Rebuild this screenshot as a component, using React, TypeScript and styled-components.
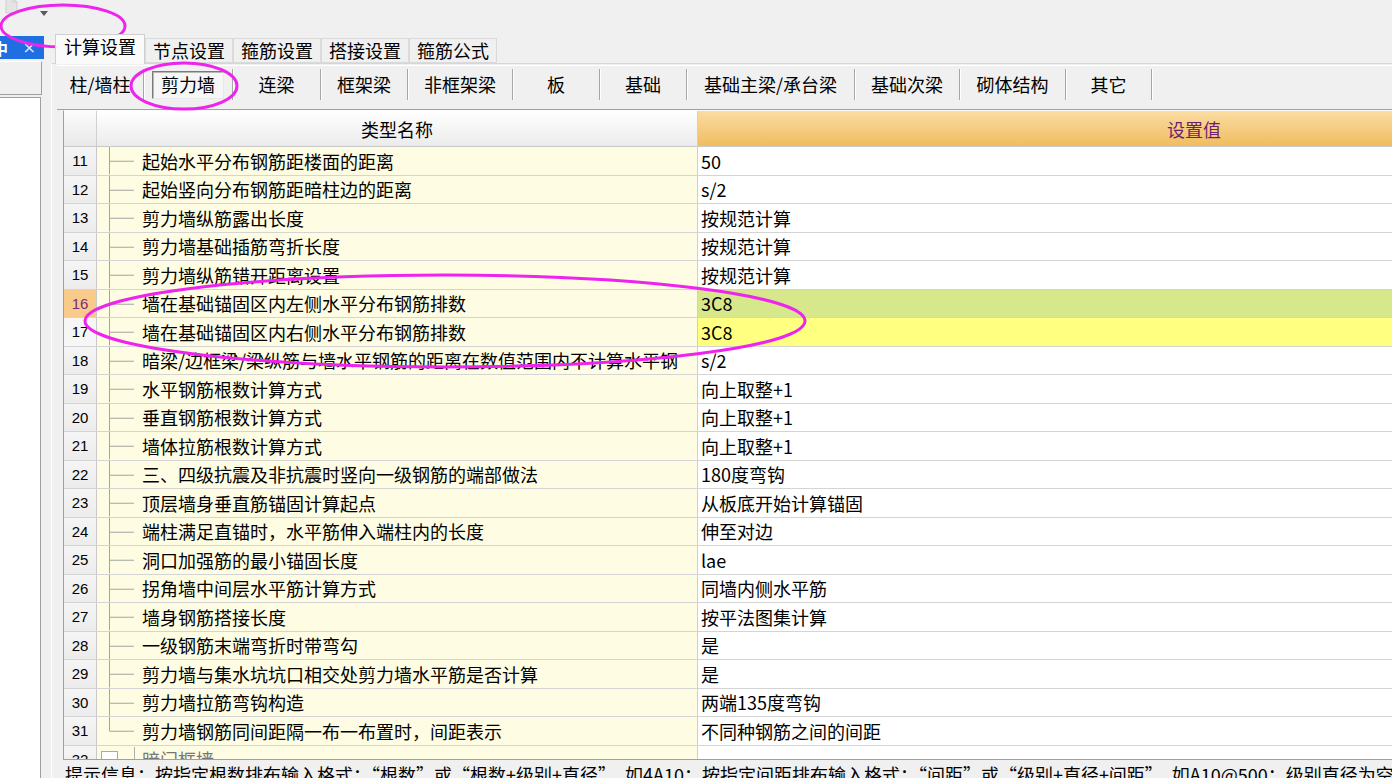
import React from 'react'
import styled, { createGlobalStyle } from 'styled-components'

type RowState = 'selected' | 'editing'

type SettingRow = {
  no: number
  name: string
  value: string
  state?: RowState
  last?: boolean
}

const tabs = ['计算设置', '节点设置', '箍筋设置', '搭接设置', '箍筋公式']

// button widths follow the original toolbar (min width ~87, wider for long labels)
const tools = [
  { label: '柱/墙柱', width: 87 },
  { label: '剪力墙', width: 89, pressed: true },
  { label: '连梁', width: 88 },
  { label: '框架梁', width: 87 },
  { label: '非框架梁', width: 105 },
  { label: '板', width: 87 },
  { label: '基础', width: 87 },
  { label: '基础主梁/承台梁', width: 168 },
  { label: '基础次梁', width: 105 },
  { label: '砌体结构', width: 106 },
  { label: '其它', width: 86 },
]

const rows: SettingRow[] = [
  { no: 11, name: '起始水平分布钢筋距楼面的距离', value: '50' },
  { no: 12, name: '起始竖向分布钢筋距暗柱边的距离', value: 's/2' },
  { no: 13, name: '剪力墙纵筋露出长度', value: '按规范计算' },
  { no: 14, name: '剪力墙基础插筋弯折长度', value: '按规范计算' },
  { no: 15, name: '剪力墙纵筋错开距离设置', value: '按规范计算' },
  { no: 16, name: '墙在基础锚固区内左侧水平分布钢筋排数', value: '3C8', state: 'selected' },
  { no: 17, name: '墙在基础锚固区内右侧水平分布钢筋排数', value: '3C8', state: 'editing' },
  { no: 18, name: '暗梁/边框梁/梁纵筋与墙水平钢筋的距离在数值范围内不计算水平钢', value: 's/2' },
  { no: 19, name: '水平钢筋根数计算方式', value: '向上取整+1' },
  { no: 20, name: '垂直钢筋根数计算方式', value: '向上取整+1' },
  { no: 21, name: '墙体拉筋根数计算方式', value: '向上取整+1' },
  { no: 22, name: '三、四级抗震及非抗震时竖向一级钢筋的端部做法', value: '180度弯钩' },
  { no: 23, name: '顶层墙身垂直筋锚固计算起点', value: '从板底开始计算锚固' },
  { no: 24, name: '端柱满足直锚时，水平筋伸入端柱内的长度', value: '伸至对边' },
  { no: 25, name: '洞口加强筋的最小锚固长度', value: 'lae' },
  { no: 26, name: '拐角墙中间层水平筋计算方式', value: '同墙内侧水平筋' },
  { no: 27, name: '墙身钢筋搭接长度', value: '按平法图集计算' },
  { no: 28, name: '一级钢筋末端弯折时带弯勾', value: '是' },
  { no: 29, name: '剪力墙与集水坑坑口相交处剪力墙水平筋是否计算', value: '是' },
  { no: 30, name: '剪力墙拉筋弯钩构造', value: '两端135度弯钩' },
  { no: 31, name: '剪力墙钢筋同间距隔一布一布置时，间距表示', value: '不同种钢筋之间的间距', last: true },
]

const hint =
  '提示信息：按指定根数排布输入格式：“根数”或“根数+级别+直径”，如4A10；按指定间距排布输入格式：“间距”或“级别+直径+间距”，如A10@500；级别直径为空时取墙身水平筋'

export default function App() {
  return (
    <>
      <GlobalStyle />
      <Page>
        <TopStrip>
          <FadedIcon width="16" height="18" viewBox="0 0 16 18">
            <path d="M2 0 L2 15 L13 15 L13 4 L9 0 Z" fill="#e4e4e4" stroke="#cfcfcf" />
            <path d="M9 0 L9 4 L13 4" fill="none" stroke="#cfcfcf" />
          </FadedIcon>
          <DropArrow width="8" height="5" viewBox="0 0 8 5">
            <path d="M0 0 L8 0 L4 5 Z" fill="#5a5a5a" />
          </DropArrow>
        </TopStrip>
        <Body>
          <LeftPane>
            <PaneHeader>
              <PaneTitle>中</PaneTitle>
              <PaneClose>×</PaneClose>
            </PaneHeader>
            <PaneTool />
            <PaneList />
          </LeftPane>
          <Main>
            <TabStrip>
              {tabs.map((t, i) => (
                <Tab key={t} $active={i === 0}>{t}</Tab>
              ))}
            </TabStrip>
            <TabPage>
              <Toolbar>
                {tools.map(t => (
                  <ToolItem key={t.label} style={{ width: t.width }}>
                    <ToolLabel $pressed={!!t.pressed}>{t.label}</ToolLabel>
                  </ToolItem>
                ))}
              </Toolbar>
              <GridWrap>
                <Grid>
                  <HeaderRow>
                    <NumHead />
                    <NameHead>类型名称</NameHead>
                    <ValueHead>设置值</ValueHead>
                  </HeaderRow>
                  {rows.map(r => (
                    <Row key={r.no}>
                      <NumCell $state={r.state}>{r.no}</NumCell>
                      <NameCell>
                        <TreeGuide last={!!r.last} />
                        <NameText>{r.name}</NameText>
                      </NameCell>
                      <ValueCell $state={r.state}>{r.value}</ValueCell>
                    </Row>
                  ))}
                  <Row>
                    <NumCell>32</NumCell>
                    <NameCell>
                      <Toggle />
                      <GroupText>暗门框墙</GroupText>
                    </NameCell>
                    <ValueCell />
                  </Row>
                </Grid>
              </GridWrap>
              <Status>{hint}</Status>
            </TabPage>
          </Main>
        </Body>
        <Annotations width="1392" height="778" viewBox="0 0 1392 778">
          <ellipse cx="63" cy="26" rx="62" ry="21" />
          <ellipse cx="184" cy="86" rx="53" ry="23" />
          <ellipse cx="445" cy="321" rx="360" ry="46" />
        </Annotations>
      </Page>
    </>
  )
}

function TreeGuide({ last }: { last: boolean }) {
  return (
    <TreeSvg width="45" height="28" viewBox="0 0 45 28" preserveAspectRatio="none">
      <line x1="12.5" y1="0" x2="12.5" y2={last ? 14.5 : 28} />
      <line x1="12.5" y1="14.5" x2="37" y2="14.5" />
    </TreeSvg>
  )
}

const GlobalStyle = createGlobalStyle`
  html, body {
    margin: 0;
    padding: 0;
    background: #f0f0f0;
  }
  body {
    font-family: "Noto Sans CJK SC", "Noto Sans", sans-serif;
    color: #000;
    overflow: hidden;
  }
`

const Page = styled.div`
  position: relative;
  width: 1392px;
  height: 778px;
  overflow: hidden;
  background: #f0f0f0;
  display: flex;
  flex-direction: column;
`

const TopStrip = styled.div`
  height: 35px;
  flex-shrink: 0;
  display: flex;
  align-items: flex-start;
`

const FadedIcon = styled.svg`
  margin: -2px 0 0 4px;
`

const DropArrow = styled.svg`
  margin: 11px 0 0 20px;
`

const Body = styled.div`
  flex: 1;
  min-height: 0;
  display: flex;
`

const LeftPane = styled.div`
  width: 44px;
  flex-shrink: 0;
  display: flex;
  flex-direction: column;
`

const PaneHeader = styled.div`
  margin-top: 1px;
  height: 23px;
  background: #1d6fe2;
  color: #fff;
  display: flex;
  align-items: center;
  justify-content: space-between;
  overflow: hidden;
  font-size: 16px;
`

const PaneTitle = styled.span`
  margin-left: -8px;
  font-weight: 700;
`

const PaneClose = styled.span`
  margin-right: 8px;
  font-family: "DejaVu Sans", sans-serif;
  font-size: 16px;
  color: #dfe9ff;
`

const PaneTool = styled.div`
  margin-top: 2px;
  width: 42px;
  height: 34px;
  box-sizing: border-box;
  border-top: 1px solid #fff;
  border-right: 1px solid #a0a0a0;
  border-bottom: 1px solid #a0a0a0;
  background: #f0f0f0;
`

const PaneList = styled.div`
  margin-top: 2px;
  width: 41px;
  flex: 1;
  box-sizing: border-box;
  background: #fff;
  border-top: 1px solid #a0a0a0;
  border-right: 1px solid #a0a0a0;
`

const Main = styled.div`
  flex: 1;
  min-width: 0;
  margin-left: 7px;
  display: flex;
  flex-direction: column;
`

const TabStrip = styled.div`
  height: 28px;
  flex-shrink: 0;
  padding-left: 4px;
  display: flex;
  align-items: flex-end;
`

const Tab = styled.div<{ $active: boolean }>`
  position: relative;
  z-index: ${p => (p.$active ? 1 : 0)};
  box-sizing: border-box;
  height: ${p => (p.$active ? '30px' : '25px')};
  margin-bottom: ${p => (p.$active ? '-1px' : '0')};
  padding: ${p => (p.$active ? '0 8px' : '0 7px')};
  border: 1px solid ${p => (p.$active ? '#d0d0d0' : '#dadada')};
  border-bottom: ${p => (p.$active ? 'none' : '1px solid #dadada')};
  background: ${p => (p.$active ? '#fafafa' : '#f0f0f0')};
  font-size: 18px;
  line-height: 23px;
  white-space: nowrap;
`

const TabPage = styled.div`
  flex: 1;
  min-height: 0;
  display: flex;
  flex-direction: column;
  border-top: 1px solid #d6d6d6;
  border-left: 1px solid #fff;
  padding-left: 5px;
`

const Toolbar = styled.div`
  margin-top: 1px;
  height: 45px;
  flex-shrink: 0;
  box-sizing: border-box;
  border-top: 1px solid #fff;
  border-bottom: 1px solid #a0a0a0;
  padding-top: 3px;
  display: flex;
  align-items: flex-start;
`

const ToolItem = styled.div`
  height: 31px;
  flex-shrink: 0;
  box-sizing: border-box;
  display: flex;
  align-items: center;
  justify-content: center;
  border-right: 1px solid #a6a6a6;
  box-shadow: 1px 0 0 #fff;
`

const ToolLabel = styled.div<{ $pressed: boolean }>`
  box-sizing: border-box;
  height: 28px;
  line-height: 25px;
  padding: 0 8px;
  min-width: 70px;
  text-align: center;
  font-size: 18px;
  white-space: nowrap;
  border: 1px solid ${p => (p.$pressed ? '#7a7a7a' : 'transparent')};
  border-right-color: ${p => (p.$pressed ? '#e8e8e8' : 'transparent')};
  border-bottom-color: ${p => (p.$pressed ? '#e8e8e8' : 'transparent')};
  background: ${p => (p.$pressed ? '#f6f6f6' : 'transparent')};
  box-shadow: ${p => (p.$pressed ? 'inset 1px 1px 0 #b9b9b9' : 'none')};
`

const GridWrap = styled.div`
  margin-left: 6px;
  height: 650px;
  flex-shrink: 0;
  box-sizing: border-box;
  border-top: 1px solid #fbfbfb;
  border-left: 1px solid #a0a0a0;
  border-bottom: 1px solid #a0a0a0;
  overflow: hidden;
`

const Grid = styled.div`
  width: 1626px;
  display: flex;
  flex-direction: column;
`

const HeaderRow = styled.div`
  height: 36px;
  flex-shrink: 0;
  display: flex;
  box-sizing: border-box;
  border-bottom: 1px solid #c9c9c9;
  font-size: 18px;
`

const NumHead = styled.div`
  width: 33px;
  flex-shrink: 0;
  box-sizing: border-box;
  border-right: 1px solid #d0d0d0;
  background: linear-gradient(#fbfbfb, #e9e9e9);
`

const NameHead = styled.div`
  width: 601px;
  flex-shrink: 0;
  box-sizing: border-box;
  border-right: 1px solid #d0d0d0;
  background: linear-gradient(#ffffff, #ebebeb);
  display: flex;
  align-items: center;
  justify-content: center;
`

const ValueHead = styled.div`
  width: 992px;
  flex-shrink: 0;
  background: linear-gradient(#fbdca2, #f0bd5f);
  color: #6d1f6d;
  display: flex;
  align-items: center;
  justify-content: center;
`

const Row = styled.div`
  height: 28.5px;
  flex-shrink: 0;
  display: flex;
  box-sizing: border-box;
  border-bottom: 1px solid #d4d4d4;
  font-size: 18px;
`

const NumCell = styled.div<{ $state?: RowState }>`
  width: 33px;
  flex-shrink: 0;
  box-sizing: border-box;
  border-right: 1px solid #c8c8c8;
  background: ${p =>
    p.$state === 'selected' ? '#f8cb8a' : p.$state === 'editing' ? '#f6f6f6' : 'linear-gradient(#f5f5f5, #ececec)'};
  color: ${p => (p.$state === 'selected' ? '#7a2a7a' : '#000')};
  font-family: "Liberation Sans", Arial, sans-serif;
  font-size: 15px;
  display: flex;
  align-items: center;
  justify-content: center;
`

const NameCell = styled.div`
  width: 601px;
  flex-shrink: 0;
  box-sizing: border-box;
  border-right: 1px solid #cfcfcf;
  background: #fefde3;
  display: flex;
  align-items: stretch;
  overflow: hidden;
`

const TreeSvg = styled.svg`
  width: 45px;
  height: 100%;
  flex-shrink: 0;
  stroke: #a3a3a3;
  stroke-width: 1;
`

const NameText = styled.span`
  align-self: center;
  white-space: nowrap;
  line-height: 24px;
`

const Toggle = styled.span`
  width: 17px;
  height: 17px;
  margin: 5px 0 0 4px;
  box-sizing: border-box;
  border: 1px solid #a8a8a8;
  background: #fff;
  flex-shrink: 0;
`

const GroupText = styled.span`
  margin: 1px 0 0 16px;
  padding-left: 7px;
  border-left: 1px solid #b0b0b0;
  color: #777;
  line-height: 24px;
  white-space: nowrap;
`

const ValueCell = styled.div<{ $state?: RowState }>`
  width: 992px;
  flex-shrink: 0;
  box-sizing: border-box;
  padding-left: 3px;
  background: ${p => (p.$state === 'selected' ? '#d7e78c' : p.$state === 'editing' ? '#ffff80' : '#fff')};
  display: flex;
  align-items: center;
  white-space: nowrap;
`

const Status = styled.div`
  padding: 2px 0 0 8px;
  font-size: 18px;
  line-height: 24px;
  white-space: nowrap;
  overflow: hidden;
`

const Annotations = styled.svg`
  position: absolute;
  left: 0;
  top: 0;
  pointer-events: none;
  fill: none;
  stroke: #ee24ee;
  stroke-width: 3;
`
